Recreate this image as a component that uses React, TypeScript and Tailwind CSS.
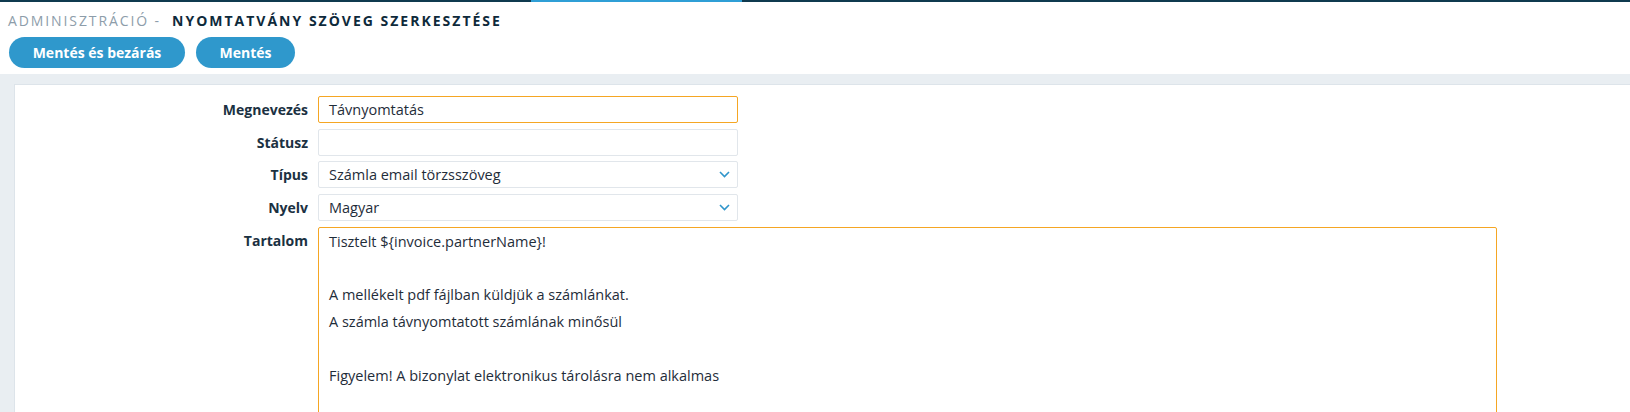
const font = { fontFamily: '"Open Sans", "Noto Sans", sans-serif' };

function Row({ label, children }: { label: string; children: React.ReactNode }) {
  return (
    <div className="flex items-start">
      <div className="flex h-[27px] w-[303px] shrink-0 items-center justify-end pr-[10px] text-[14px] font-bold text-[#1b3142]">
        {label}
      </div>
      {children}
    </div>
  );
}

function Chevron() {
  return (
    <svg width="11" height="7" viewBox="0 0 11 7" fill="none" className="text-[#2f95cb]">
      <polyline points="1,1 5.5,5.5 10,1" stroke="currentColor" strokeWidth="1.6" />
    </svg>
  );
}

function Select({ value }: { value: string }) {
  return (
    <div className="flex h-[27px] w-[420px] items-center justify-between rounded-[2px] border border-[#e1e6eb] bg-white pl-[10px] pr-[7px] text-[14.5px] text-[#1f2d3a]">
      <span>{value}</span>
      <Chevron />
    </div>
  );
}

export default function App() {
  return (
    <div className="h-[412px] overflow-hidden bg-white" style={font}>
      <div className="flex h-[2px] bg-[#0f3a4f]">
        <div className="w-[531px]" />
        <div className="w-[211px] bg-[#2f9fd6]" />
      </div>
      <div className="px-[8px] pt-[9.5px]">
        <h1 className="text-[14px] leading-[18px] tracking-[1.9px]">
          <span className="text-[#8d9daa]">ADMINISZTRÁCIÓ -</span>
          <span className="ml-[11px] font-bold tracking-[2px] text-[#0e2a3b]">NYOMTATVÁNY SZÖVEG SZERKESZTÉSE</span>
        </h1>
        <div className="mt-[7.5px] flex gap-[11px] pl-[1px]">
          <button className="h-[31px] w-[176px] rounded-full bg-[#2f98cc] text-[14px] font-bold text-white">
            Mentés és bezárás
          </button>
          <button className="h-[31px] w-[99px] rounded-full bg-[#2f98cc] text-[14px] font-bold text-white">
            Mentés
          </button>
        </div>
      </div>
      <div className="mt-[6px] bg-[#e9eef2] pl-[14px] pt-[10px]">
        <div className="h-[400px] border-l border-t border-[#dde4ea] bg-white pt-[11px]">
          <div className="flex flex-col gap-[5.7px]">
            <Row label="Megnevezés">
              <div className="flex h-[27px] w-[420px] items-center rounded-[2px] border border-[#f5a623] bg-white px-[10px] text-[14.5px] text-[#1f2d3a]">
                Távnyomtatás
              </div>
            </Row>
            <Row label="Státusz">
              <div className="h-[27px] w-[420px] rounded-[2px] border border-[#e1e6eb] bg-white" />
            </Row>
            <Row label="Típus">
              <Select value="Számla email törzsszöveg" />
            </Row>
            <Row label="Nyelv">
              <Select value="Magyar" />
            </Row>
            <Row label="Tartalom">
              <div className="h-[260px] w-[1179px] rounded-[2px] border border-[#f5a623] bg-white px-[10px] pt-[1px] text-[14.5px] leading-[26.8px] text-[#1f2d3a]">
                <div>Tisztelt ${'{'}invoice.partnerName{'}'}!</div>
                <div className="h-[26.8px]" />
                <div>A mellékelt pdf fájlban küldjük a számlánkat.</div>
                <div>A számla távnyomtatott számlának minősül</div>
                <div className="h-[26.8px]" />
                <div>Figyelem! A bizonylat elektronikus tárolásra nem alkalmas</div>
              </div>
            </Row>
          </div>
        </div>
      </div>
    </div>
  );
}
